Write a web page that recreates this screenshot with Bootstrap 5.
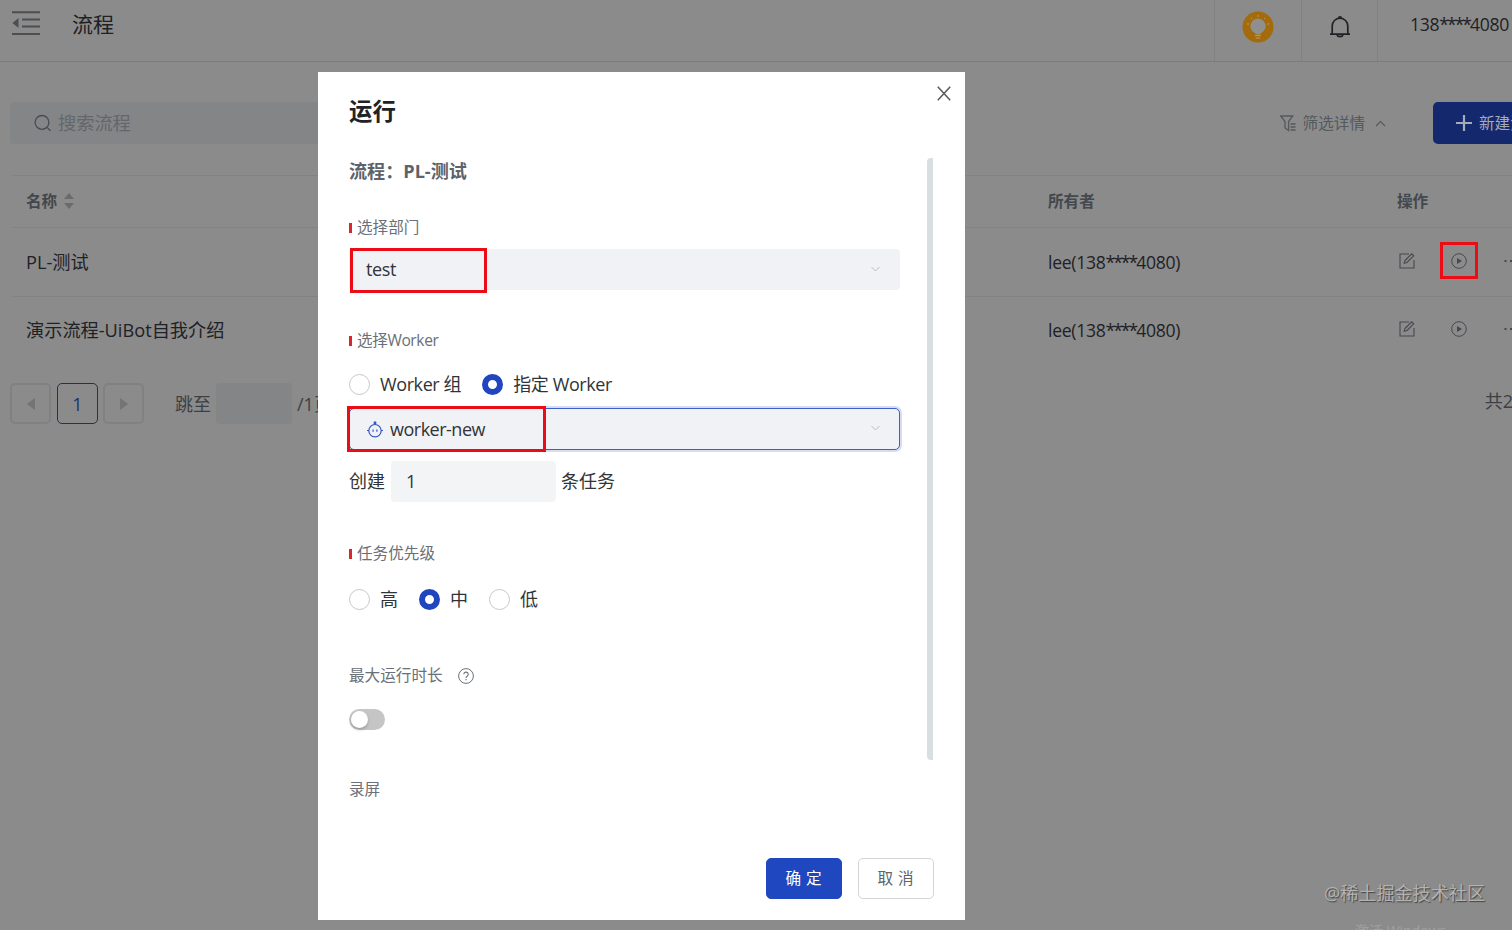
<!DOCTYPE html>
<html lang="zh-CN">
<head>
<meta charset="utf-8">
<meta name="viewport" content="width=device-width, initial-scale=1">
<title>流程</title>
<link rel="stylesheet" href="https://cdn.jsdelivr.net/npm/bootstrap@5.3.0/dist/css/bootstrap.min.css">
<style>
body{font-family:"Open Sans","Noto Sans CJK SC",sans-serif;background:#8b8b8b;color:#1e2125;height:930px;overflow:hidden;white-space:nowrap;font-size:18px;line-height:1.4}
svg{display:block;flex:none}
svg:not([fill]){fill:none}
svg:not([stroke]){stroke:currentColor}
.page-shell{width:1512px;height:930px}
.topbar{height:62px;border-bottom:1px solid #7c7c7e}
.topbar .cell{border-left:1px solid #808184;height:61px}
.toolbar{height:42px;margin-top:40px}
.search-box{width:420px;background:#848587;color:#62676b;border-radius:4px;padding-left:24px}
.filter-link{color:#54595e;font-size:15.6px}
.new-btn{background:#14296d;color:#a6abb9;width:140px;border-radius:5px 0 0 5px;font-size:15.6px;padding-left:23px}
.flow-table{width:1560px;margin:31px 0 0 11px;table-layout:fixed;--bs-table-bg:transparent;--bs-table-color:#1e2125}
.flow-table>:not(caption)>*>*{padding:0 0 0 15px;vertical-align:middle;border-bottom:1px solid #828282}
.flow-table th{height:52px;font-size:15.6px;color:#43484e;border-top:1px solid #828282}
.flow-table td{height:68.5px;padding-top:1px!important}
.flow-table tr:last-child td{border-bottom-color:transparent}
.ops{color:#45494e}
.latin{letter-spacing:-.3px;font-size:17.6px}
.stars{letter-spacing:-2px}
.nudge{padding-top:2px}
.flow-title{font-size:18.2px}
.pg{width:41px;height:41px;border:2px solid #818181;border-radius:5px;color:#747476}
.pg.current{border-color:#1b2f73;color:#1b2f73;border-width:1.5px}
.jump-input{width:76px;height:41px;background:#848587;border-radius:4px}
.run-dialog{left:318px;top:72px;width:647px;height:848px;background:#fff;padding:0 31px;color:#303438}
.line-row{display:flex;align-items:center}
.dialog-title{height:78px;font-size:23.4px;font-weight:700;color:#202225}
.flow-name{height:44px;font-size:18.1px;font-weight:700;color:#5d636a}
.field-label{height:42px;font-size:15.6px;color:#6a7077}
.required::before{content:"";width:3px;height:10px;background:#d9262d;margin-right:5px}
.pick{width:551px;height:41px;background:#f1f2f5;border-radius:4px;padding:0 19px 0 17px}
.pick.focused{height:42px;border:1.5px solid #3c5fc8;box-shadow:0 0 0 2px #d5dcf4;border-radius:5px;padding:0 18px 0 17px}
.tight{letter-spacing:-.4px}
.dot{width:21px;height:21px;border:1px solid #c6c8cb;border-radius:50%;flex:none;margin-right:10px}
.dot.on{border:6.5px solid #2045bf}
.count-input{width:165px;height:41px;background:#f3f4f6;border-radius:4px;margin:0 6px;padding-left:15px}
.toggle{width:36px;height:21px;border-radius:11px;background:#c5c5c5;margin-top:12px;padding:2px}
.toggle span{display:block;width:17px;height:17px;border-radius:50%;background:#fff;box-shadow:0 2px 3px #0003}
.act{width:76px;height:41px;border-radius:5px;font-size:15.6px;letter-spacing:5px;padding:1px 0 0 5px;border:1px solid #d3d5d8;color:#5e646a;background:#fff}
.act.ok{background:#1f47bf;border-color:#1f47bf;color:#fff}
.thumb{left:609px;top:86px;width:6px;height:602px;background:#d9dfe0;border-radius:4px 0 0 4px}
.hilite{border:3px solid #eb0c16}
.stamp{left:1324px;top:881px;font-size:18.1px;color:#b2b2b2;text-shadow:1px 1px 1px #444}
.sys-note{left:1355px;top:921px;font-size:14px;color:#a0a0a0}
</style>
</head>
<body>
<div class="page-shell position-relative overflow-hidden">
  <header class="topbar d-flex">
    <svg style="margin:10px 0 0 12px;color:#4c4e51" width="28" height="26" stroke-width="2"><path d="M0 2.3h28M10 9.5h18M10 16.5h18M0 24h28"/><path d="M6.5 8v10L.5 13z" fill="currentColor" stroke="none"/></svg>
    <div style="font-size:21px;margin:10px 0 0 32px">流程</div>
    <div class="cell ms-auto" style="width:87px"><svg style="margin:11px 0 0 27px" width="32" height="32" viewBox="0 0 32 32"><circle cx="16" cy="16" r="15.5" fill="#a46b0c" stroke="none"/><path d="M13 22.2a7.6 7.6 0 1 1 6 0l-1 1.3h-4z" fill="#8f8f8f" stroke="none"/><path d="M13 24.6h6M13.7 27h4.6M6 14v-2M9 8l1.2-1M15 5h2M22 7l1.2 1M26 14v-2" stroke="#b99a62"/></svg></div>
    <div class="cell" style="width:76px"><svg style="margin:16px 0 0 27px;color:#202226" width="22" height="22" stroke-width="1.7"><path d="M1 18.2h20M3.2 18V10a7.8 7.8 0 0 1 15.6 0v8M9.7 2.2a1.3 1.3 0 0 1 2.6 0M8.2 18.5a2.8 2.2 0 0 0 5.6 0"/></svg></div>
    <div class="cell latin" style="width:135px;padding:12px 0 0 32px">138<span class="stars">****</span>4080</div>
  </header>

  <div class="toolbar d-flex align-items-stretch" style="padding-left:10px">
    <div class="search-box d-flex align-items-center"><svg style="margin-right:7px" width="17" height="18" stroke="#484c50" stroke-width="1.3"><circle cx="8" cy="8.4" r="6.9"/><path d="M13 13.4l3.4 3.4"/></svg><span class="nudge" style="font-size:18.2px">搜索流程</span></div>
    <div class="filter-link d-flex align-items-center ms-auto"><svg width="16" height="17" stroke-width="1.3"><path d="M.7 1h12L8.6 6.5V15.5L5 13V6.5zM10.5 9h5M10.5 12h5M10.5 15h5"/></svg><span class="nudge" style="margin:0 10px 0 7px">筛选详情</span><svg width="11" height="7" stroke-width="1.2"><path d="M1 6l4.5-4.5L10 6"/></svg></div>
    <div class="new-btn d-flex align-items-center flex-shrink-0" style="margin-left:47px;margin-right:-61px"><svg width="16" height="16" stroke-width="2.2"><path d="M8 0v16M0 8h16"/></svg><span class="nudge" style="margin-left:7px">新建流程</span></div>
  </div>

  <table class="table flow-table">
    <colgroup><col style="width:1022px"><col style="width:349px"><col></colgroup>
    <thead><tr>
      <th><div class="d-flex align-items-center">名称<svg style="margin-left:7px" width="10" height="16" stroke="none"><path fill="#6a6b6d" d="M0 6l5-6 5 6zM0 10h10l-5 6z"/></svg></div></th>
      <th>所有者</th><th>操作</th></tr></thead>
    <tbody>
      <tr><td><span class="flow-title">PL-测试</span></td><td><span class="latin">lee(138<span class="stars">****</span>4080)</span></td>
        <td><div class="d-flex align-items-center ops" style="margin:-3px 0 0 2px"><svg width="16" height="16" stroke-width="1.1"><path d="M10 1H1v14h14V7M6 7.5L12.7.8l2 2L8 9.5l-2.8.7z"/></svg><svg style="margin:0 37px 0 36px" width="16" height="16"><circle cx="8" cy="8" r="7.3"/><path d="M6 5l5 3-5 3z" fill="currentColor" stroke="none"/></svg><svg width="16" height="4" stroke="none"><path fill="currentColor" d="M.5 1h2v2h-2zM6 1h2v2H6zM11.5 1h2v2h-2z"/></svg></div></td></tr>
      <tr><td><span class="flow-title">演示流程-UiBot自我介绍</span></td><td><span class="latin">lee(138<span class="stars">****</span>4080)</span></td>
        <td><div class="d-flex align-items-center ops" style="margin:-3px 0 0 2px"><svg width="16" height="16" stroke-width="1.1"><path d="M10 1H1v14h14V7M6 7.5L12.7.8l2 2L8 9.5l-2.8.7z"/></svg><svg style="margin:0 37px 0 36px" width="16" height="16"><circle cx="8" cy="8" r="7.3"/><path d="M6 5l5 3-5 3z" fill="currentColor" stroke="none"/></svg><svg width="16" height="4" stroke="none"><path fill="currentColor" d="M.5 1h2v2h-2zM6 1h2v2H6zM11.5 1h2v2h-2z"/></svg></div></td></tr>
    </tbody>
  </table>

  <div class="d-flex align-items-center" style="margin-top:18px;padding-left:10px;color:#3c4044">
    <div class="pg d-flex align-items-center justify-content-center"><svg width="8" height="12" stroke="none"><path fill="currentColor" d="M8 0v12L0 6z"/></svg></div>
    <div class="pg current nudge d-flex align-items-center justify-content-center" style="margin:0 5px 0 6px">1</div>
    <div class="pg d-flex align-items-center justify-content-center"><svg width="8" height="12" stroke="none"><path fill="currentColor" d="M0 0v12l8-6z"/></svg></div>
    <span class="nudge" style="margin:0 5px 0 31px">跳至</span><div class="jump-input"></div><span class="nudge" style="margin-left:5px">/1页</span>
    <span class="ms-auto" style="margin:-3px -19px 0 0">共2条</span>
  </div>

  <div class="hilite position-absolute" style="left:1440px;top:242px;width:38px;height:37px"></div>
  <div class="stamp position-absolute">@稀土掘金技术社区</div>
  <div class="sys-note position-absolute">激活 Windows</div>

  <section class="run-dialog position-absolute">
    <svg class="position-absolute" style="left:619px;top:14px;color:#55595e" width="14" height="15" stroke-width="1.5"><path d="M.8.8l12.4 13.4M13.2.8L.8 14.2"/></svg>
    <div class="line-row dialog-title">运行</div>
    <div class="line-row flow-name">流程：PL-测试</div>
    <div class="line-row field-label required" style="margin-top:13px">选择部门</div>
    <div class="pick line-row justify-content-between"><span class="tight">test</span><svg width="11" height="7" stroke="#b9bcc0"><path d="M1.5 1l4 4 4-4"/></svg></div>
    <div class="line-row field-label required tight" style="margin-top:30px">选择Worker</div>
    <div class="line-row" style="height:45px"><span class="dot"></span><span class="tight">Worker 组</span><span class="dot on" style="margin-left:21px"></span><span class="tight">指定 Worker</span></div>
    <div class="pick focused line-row" style="margin-top:.5px"><svg style="margin:1px 7px 0 0" width="16" height="17" stroke="#3157c4" stroke-width="1.2"><circle cx="8" cy="9.7" r="6.2"/><path d="M8 3.3V1M0 9.5h2M14 9.5h2M6.1 8.5v2.2M9.9 8.5v2.2"/><circle cx="8" cy="1.8" r=".9"/></svg><span style="letter-spacing:-.5px;padding-top:3px">worker-new</span><svg class="ms-auto" width="11" height="7" stroke="#b9bcc0"><path d="M1.5 1l4 4 4-4"/></svg></div>
    <div class="line-row" style="margin-top:11px"><span class="nudge">创建</span><div class="count-input nudge line-row">1</div><span class="nudge" style="margin-left:-1px">条任务</span></div>
    <div class="line-row field-label required" style="margin-top:31px">任务优先级</div>
    <div class="line-row" style="height:49px"><span class="dot"></span><span class="nudge">高</span><span class="dot on" style="margin-left:21px"></span><span class="nudge">中</span><span class="dot" style="margin-left:21px"></span><span class="nudge">低</span></div>
    <div class="line-row field-label" style="margin-top:31px">最大运行时长<svg style="margin-left:15px" width="16" height="16"><circle cx="8" cy="8" r="7.4"/><path d="M5.8 6.3a2.2 2.2 0 1 1 3.3 1.9Q8 8.8 8 9.9M8 11v1.3" stroke-width="1.1"/></svg></div>
    <div class="toggle"><span></span></div>
    <div class="line-row field-label" style="margin-top:39px">录屏</div>
    <div class="d-flex justify-content-end" style="margin-top:47px;gap:16px;margin-right:.5px"><button class="btn act ok">确定</button><button class="btn act">取消</button></div>
    <div class="thumb position-absolute"></div>
    <div class="hilite position-absolute" style="left:32px;top:176px;width:137px;height:45px"></div>
    <div class="hilite position-absolute" style="left:29px;top:334px;width:199px;height:46px"></div>
  </section>
</div>
<script src="https://cdn.jsdelivr.net/npm/bootstrap@5.3.0/dist/js/bootstrap.bundle.min.js"></script>
</body>
</html>
